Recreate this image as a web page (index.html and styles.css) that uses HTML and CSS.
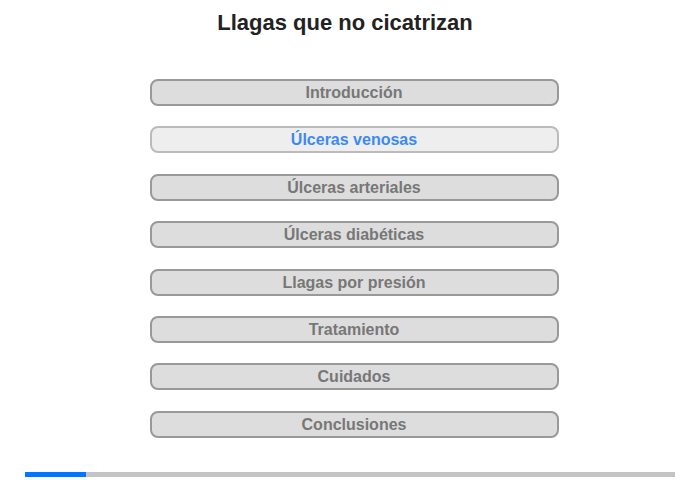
FILE: index.html
```html
<!DOCTYPE html>
<html lang="es">
<head>
<meta charset="UTF-8">
<title>Llagas que no cicatrizan</title>
<link rel="stylesheet" href="styles.css">
</head>
<body>
<div class="container">
  <h1>Llagas que no cicatrizan</h1>
  <div class="menu">
    <div class="menu-item">Introducción</div>
    <div class="menu-item active">Úlceras venosas</div>
    <div class="menu-item">Úlceras arteriales</div>
    <div class="menu-item">Úlceras diabéticas</div>
    <div class="menu-item">Llagas por presión</div>
    <div class="menu-item">Tratamiento</div>
    <div class="menu-item">Cuidados</div>
    <div class="menu-item">Conclusiones</div>
  </div>
  <div class="progress">
    <div class="progress-fill" style="width: 9.4%;"></div>
  </div>
</div>
</body>
</html>
```

FILE: styles.css
```css
body {
  font-family: "Liberation Sans", Arial, sans-serif;
  margin: 0;
  padding: 0;
  background-color: #fff;
}

.container {
  width: 700px;
  height: 480px;
  display: flex;
  flex-direction: column;
  align-items: center;
}

h1 {
  margin: 10px 10px 0 0;
  font-size: 22px;
  line-height: 26px;
  color: #222;
  font-weight: bold;
}

.menu {
  margin: 43px 0 0 8px;
  display: flex;
  flex-direction: column;
  gap: 20.4px;
}

.menu-item {
  width: 405px;
  height: 23px;
  border: 2px solid #999;
  border-radius: 8px;
  background-color: #ddd;
  color: #777;
  font-size: 16px;
  font-weight: bold;
  line-height: 23px;
  text-align: center;
}

.menu-item.active {
  background-color: #eee;
  border-color: #bbb;
  color: #3b8af5;
}

.progress {
  margin-top: 34px;
  width: 650px;
  height: 5px;
  background-color: #c4c4c4;
}

.progress-fill {
  height: 100%;
  background-color: #0077ff;
}
```
